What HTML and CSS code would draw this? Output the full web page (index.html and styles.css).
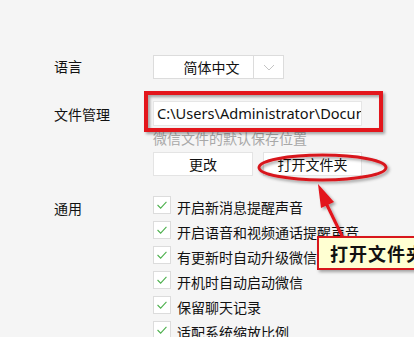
FILE: index.html
```html
<!DOCTYPE html>
<html lang="zh-CN">
<head>
    <meta charset="UTF-8">
    <meta name="viewport" content="width=device-width, initial-scale=1.0">
    <title>设置</title>
    <link rel="stylesheet" href="styles.css">
</head>
<body>
    <div class="settings">
        <div class="label lang-label">语言</div>
        <div class="control">
            <div class="select">
                <span class="select-value">简体中文</span>
                <span class="select-arrow">
                    <svg width="12" height="7" viewBox="0 0 12 7"><path d="M1 1 L6 6 L11 1" fill="none" stroke="#c4c4c4" stroke-width="1"/></svg>
                </span>
            </div>
        </div>

        <div class="label file-label">文件管理</div>
        <div class="control file-control">
            <div class="path-input">C:\Users\Administrator\Documents\WeChat Files</div>
            <div class="hint">微信文件的默认保存位置</div>
            <div class="buttons">
                <button class="btn btn-change">更改</button>
                <button class="btn btn-open">打开文件夹</button>
            </div>
        </div>

        <div class="label general-label">通用</div>
        <div class="control general-control">
            <label class="check-row"><span class="box"><svg width="18" height="18" viewBox="0 0 18 18"><path d="M4 9 L7.5 12.5 L14 5.5" fill="none" stroke="#4cb04c" stroke-width="1.2"/></svg></span>开启新消息提醒声音</label>
            <label class="check-row"><span class="box"><svg width="18" height="18" viewBox="0 0 18 18"><path d="M4 9 L7.5 12.5 L14 5.5" fill="none" stroke="#4cb04c" stroke-width="1.2"/></svg></span>开启语音和视频通话提醒声音</label>
            <label class="check-row"><span class="box"><svg width="18" height="18" viewBox="0 0 18 18"><path d="M4 9 L7.5 12.5 L14 5.5" fill="none" stroke="#4cb04c" stroke-width="1.2"/></svg></span>有更新时自动升级微信</label>
            <label class="check-row"><span class="box"><svg width="18" height="18" viewBox="0 0 18 18"><path d="M4 9 L7.5 12.5 L14 5.5" fill="none" stroke="#4cb04c" stroke-width="1.2"/></svg></span>开机时自动启动微信</label>
            <label class="check-row"><span class="box"><svg width="18" height="18" viewBox="0 0 18 18"><path d="M4 9 L7.5 12.5 L14 5.5" fill="none" stroke="#4cb04c" stroke-width="1.2"/></svg></span>保留聊天记录</label>
            <label class="check-row"><span class="box"><svg width="18" height="18" viewBox="0 0 18 18"><path d="M4 9 L7.5 12.5 L14 5.5" fill="none" stroke="#4cb04c" stroke-width="1.2"/></svg></span>适配系统缩放比例</label>
        </div>
    </div>

    <!-- annotation marks drawn over the window -->
    <svg class="marks" width="414" height="337" viewBox="0 0 414 337">
        <defs>
            <filter id="shadow" x="-10%" y="-30%" width="130%" height="180%">
                <feDropShadow dx="2" dy="2" stdDeviation="1.5" flood-color="#000" flood-opacity="0.35"/>
            </filter>
        </defs>
        <rect x="146" y="93" width="235" height="37" fill="none" stroke="#e3121a" stroke-width="4" filter="url(#shadow)"/>
        <ellipse cx="322.5" cy="167.5" rx="63.5" ry="12.5" fill="none" stroke="#d8161c" stroke-width="3" filter="url(#shadow)"/>
        <g filter="url(#shadow)">
            <line x1="343" y1="238" x2="326" y2="203" stroke="#e3121a" stroke-width="3"/>
            <polygon points="318,184 334,202 321,208" fill="#e3121a"/>
        </g>
    </svg>
    <div class="callout">打开文件夹</div>
</body>
</html>
```

FILE: styles.css
```css
body {
    margin: 0;
    background: #f5f5f5;
    font-family: "Noto Sans CJK SC", "Noto Sans", sans-serif;
    font-size: 14px;
    color: #111;
    height: 337px;
    overflow: hidden;
    position: relative;
}
.settings {
    display: grid;
    grid-template-columns: 99px 1fr;
    padding: 55px 0 0 54px;
}
.label {
    line-height: 22px;
}
.control {
    display: flex;
    flex-direction: column;
}
.select {
    display: flex;
    width: 129px;
    height: 22px;
    border: 1px solid #dcdcdc;
    background: #fff;
}
.select-value {
    width: 100px;
    border-right: 1px solid #dcdcdc;
    line-height: 22px;
    padding-left: 16px;
    box-sizing: border-box;
    text-align: center;
}
.select-arrow {
    flex: 1;
    display: flex;
    align-items: center;
    justify-content: center;
}
.file-label {
    margin-top: 24px;
    line-height: 23px;
}
.file-control {
    margin-top: 22px;
}
.path-input {
    width: 209px;
    height: 25px;
    box-sizing: border-box;
    background: #fff;
    border: 1px solid #e6e6e6;
    font-family: "Noto Sans", sans-serif;
    font-size: 14.6px;
    line-height: 23px;
    padding-left: 3px;
    white-space: nowrap;
    overflow: hidden;
}
.hint {
    color: #a8a8a8;
    line-height: 20px;
    margin-top: 2px;
}
.buttons {
    display: flex;
    gap: 10px;
    margin-top: 4px;
}
.btn {
    height: 24px;
    background: #fff;
    border: 1px solid #e4e4e4;
    font-family: inherit;
    font-size: 14px;
    color: #111;
    padding: 0;
}
.btn-change {
    width: 100px;
}
.btn-open {
    width: 99px;
}
.general-label {
    margin-top: 21px;
    line-height: 22px;
}
.general-control {
    margin-top: 21px;
}
.check-row {
    display: flex;
    align-items: center;
    height: 25px;
    margin-top: -3px;
    margin-bottom: 3px;
    white-space: nowrap;
}
.box {
    width: 16px;
    height: 16px;
    border: 1px solid #dcdcdc;
    background: #fff;
    margin-right: 6px;
    display: flex;
    align-items: center;
    justify-content: center;
    position: relative;
    top: -2px;
}
.box svg {
    display: block;
}
.marks {
    position: absolute;
    top: 0;
    left: 0;
    pointer-events: none;
}
.callout {
    position: absolute;
    left: 317px;
    top: 236px;
    width: 110px;
    height: 30px;
    border: 2px solid #d8161c;
    background: #ffffd2;
    box-shadow: 2px 2px 3px rgba(0, 0, 0, 0.35);
    font-size: 18px;
    font-weight: bold;
    line-height: 30px;
    padding-left: 11px;
    letter-spacing: 1px;
    white-space: nowrap;
}
```
